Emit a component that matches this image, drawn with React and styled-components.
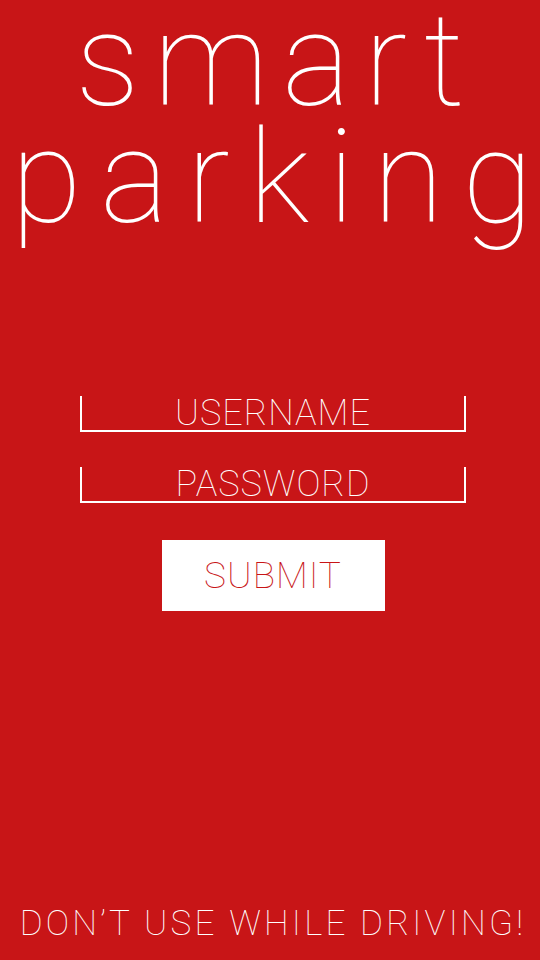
import styled, { createGlobalStyle } from 'styled-components';

const GlobalStyle = createGlobalStyle`
  html, body {
    margin: 0;
    padding: 0;
    background: #c81517;
  }
  * { box-sizing: border-box; }
`

const Screen = styled.div`
  width: 540px;
  height: 960px;
  background: #c81517;
  color: #ffffff;
  font-family: Roboto, "Liberation Sans", sans-serif;
  font-weight: 100;
  display: flex;
  flex-direction: column;
  align-items: center;
  overflow: hidden;
`

const Title = styled.h1`
  margin: 0;
  padding-top: 2px;
  display: flex;
  flex-direction: column;
  align-items: center;
  gap: 0;
  font-weight: 100;
  font-size: 129px;
  line-height: 117px;
  white-space: nowrap;
`

const TitleLine = styled.span`
  display: block;
  letter-spacing: ${p => p.$spacing}px;
  margin-left: ${p => p.$spacing + p.$shift}px;
`

const Form = styled.form`
  margin-top: 160px;
  padding-left: 6px;
  display: flex;
  flex-direction: column;
  align-items: center;
  gap: 35px;
`

const Field = styled.input`
  width: 386px;
  height: 36px;
  padding: 0;
  background: transparent;
  border: 2px solid #ffffff;
  border-top: none;
  outline: none;
  color: #ffffff;
  text-align: center;
  font-family: inherit;
  font-weight: 100;
  font-size: 36px;
  line-height: 34px;
  letter-spacing: 1px;
  text-transform: uppercase;
  &::placeholder {
    color: #ffffff;
    opacity: 1;
  }
`

const SubmitButton = styled.button`
  margin-top: 2px;
  width: 223px;
  height: 71px;
  border: none;
  background: #ffffff;
  color: #c81517;
  font-family: inherit;
  font-weight: 100;
  font-size: 37px;
  letter-spacing: 1px;
  cursor: pointer;
`

const Footer = styled.p`
  margin: auto 0 16px;
  padding-left: 6px;
  font-size: 35px;
  font-weight: 100;
  letter-spacing: 3.2px;
  white-space: nowrap;
`

export default function App() {
  return (
    <>
      <GlobalStyle />
      <Screen>
        <Title>
          <TitleLine $spacing={13.5} $shift={0}>smart</TitleLine>
          <TitleLine $spacing={18.5} $shift={4}>parking</TitleLine>
        </Title>
        <Form onSubmit={e => e.preventDefault()}>
          <Field type="text" placeholder="USERNAME" />
          <Field type="password" placeholder="PASSWORD" />
          <SubmitButton type="submit">SUBMIT</SubmitButton>
        </Form>
        <Footer>DON’T USE WHILE DRIVING!</Footer>
      </Screen>
    </>
  )
}
